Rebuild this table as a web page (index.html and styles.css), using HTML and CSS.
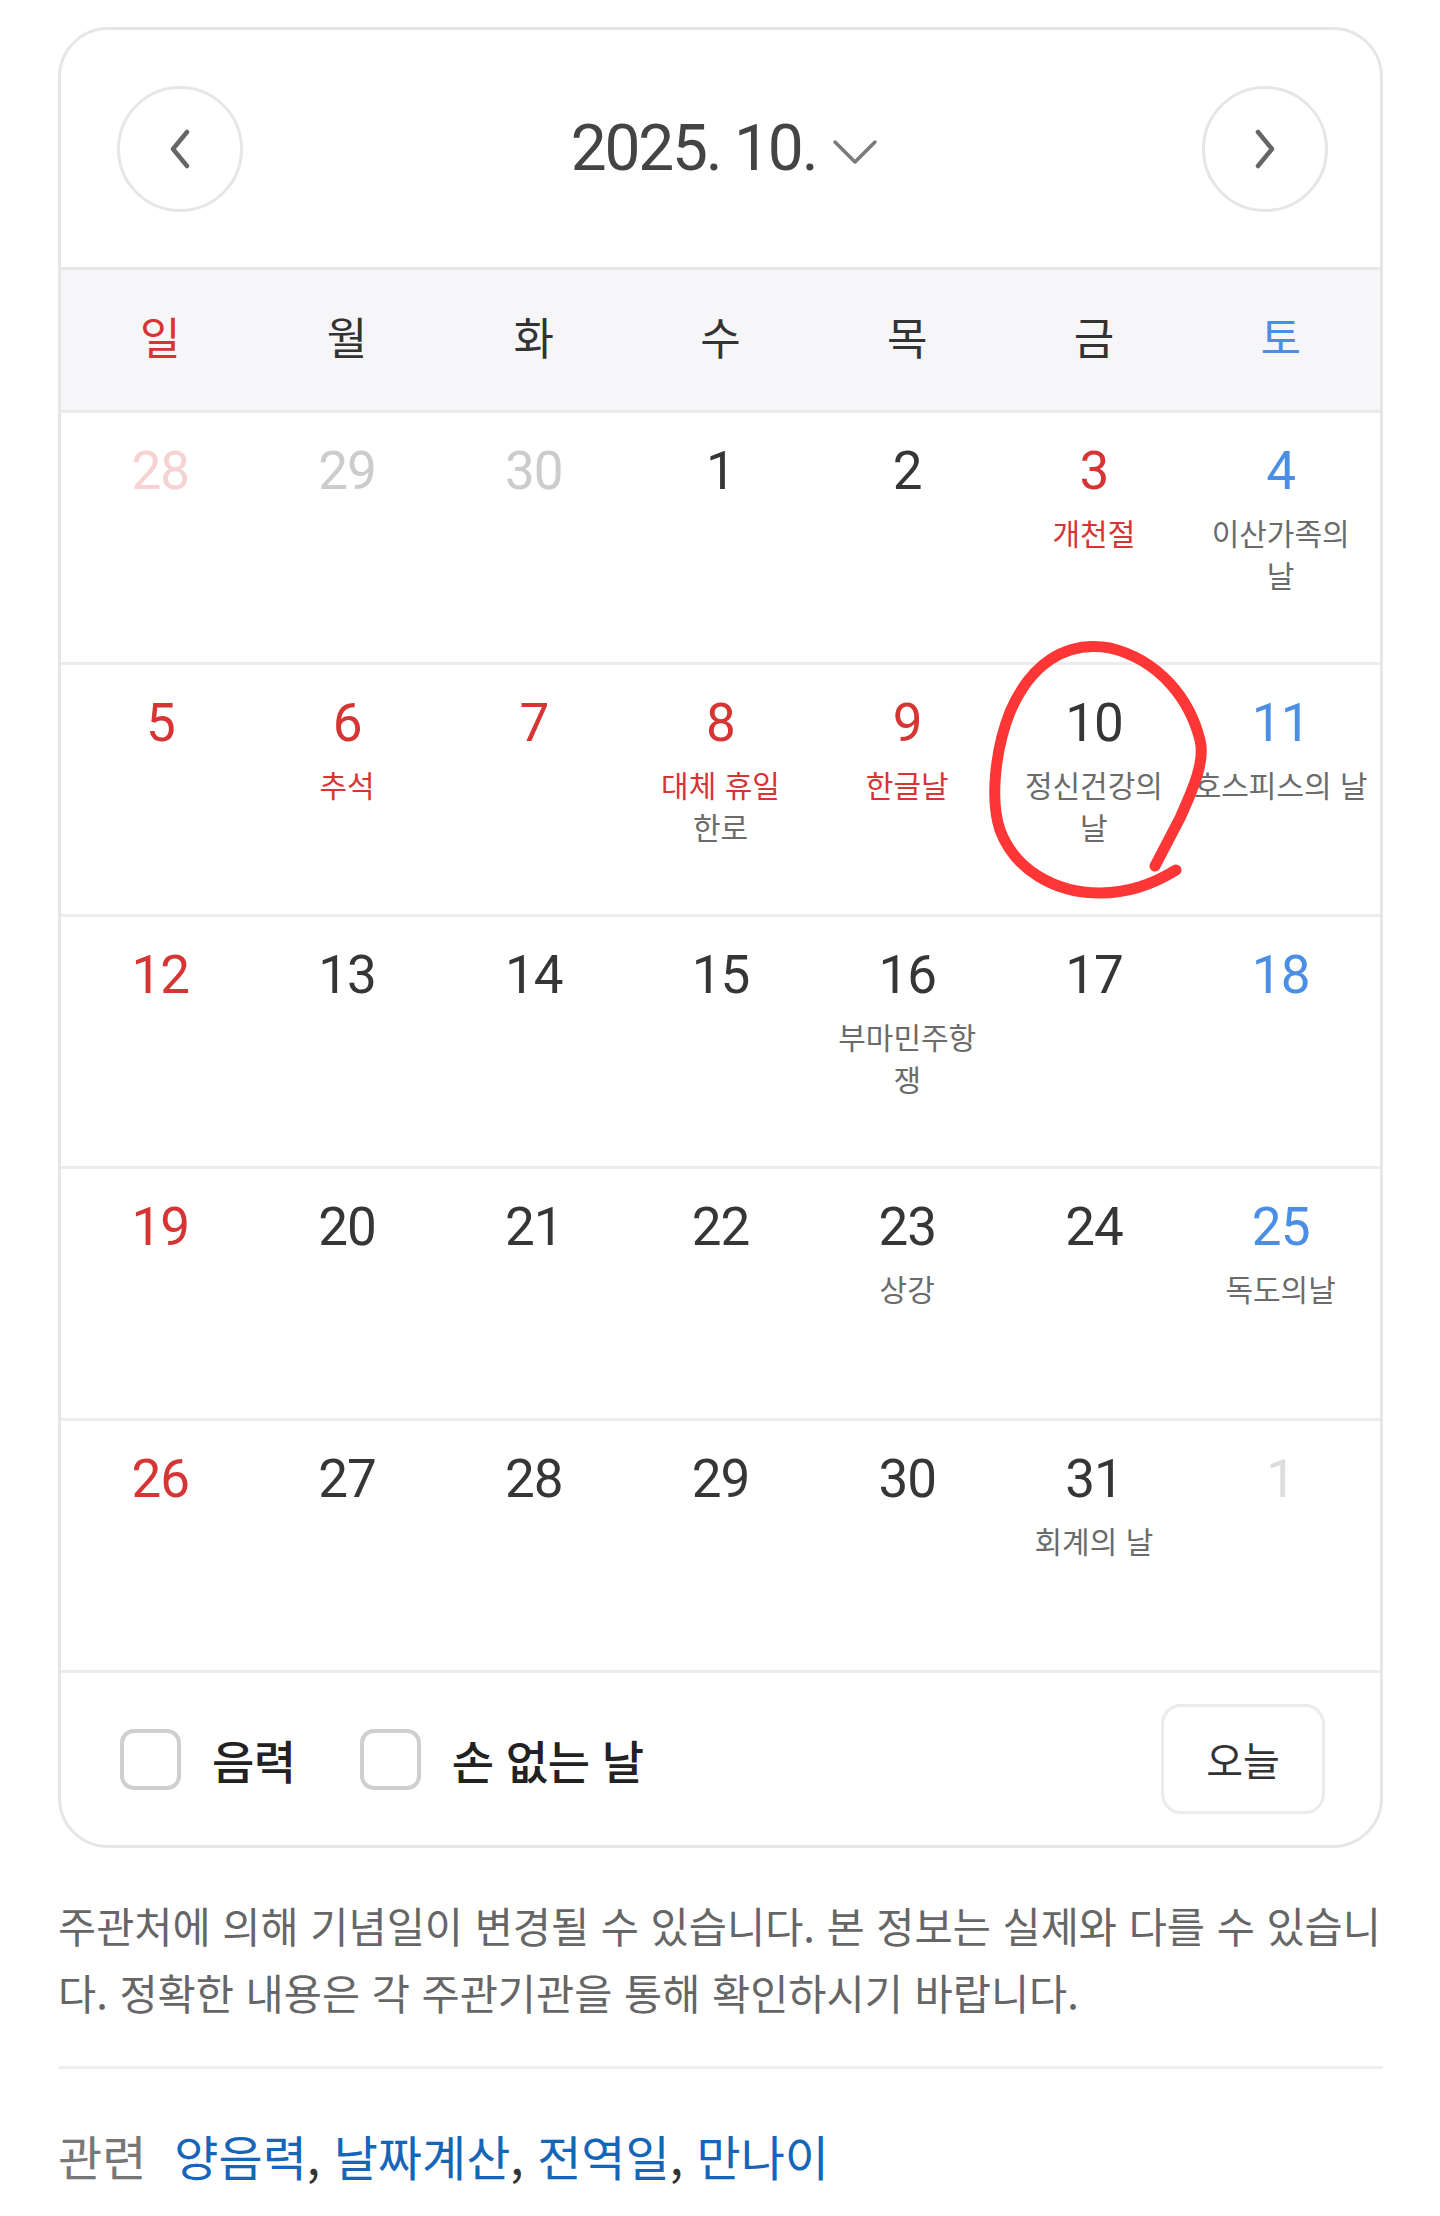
FILE: index.html
```html
<!DOCTYPE html>
<html lang="ko">
<head>
<meta charset="utf-8">
<title>2025. 10. 달력</title>
<link rel="stylesheet" href="styles.css">
</head>
<body>
<div class="page">
  <section class="calendar">
    <header class="cal-head">
      <button class="nav-btn" aria-label="이전 달">
        <svg class="nav-icon" viewBox="0 0 24 40" width="24" height="40"><path d="M19 3 L5 20 L19 37"/></svg>
      </button>
      <div class="title">
        <span class="title-text">2025. 10.</span>
        <svg class="title-caret" viewBox="0 0 46 26" width="46" height="26"><path d="M3 3 L23 23 L43 3"/></svg>
      </div>
      <button class="nav-btn" aria-label="다음 달">
        <svg class="nav-icon" viewBox="0 0 24 40" width="24" height="40"><path d="M5 3 L19 20 L5 37"/></svg>
      </button>
    </header>

    <div class="weekdays">
      <span class="wd sun">일</span>
      <span class="wd">월</span>
      <span class="wd">화</span>
      <span class="wd">수</span>
      <span class="wd">목</span>
      <span class="wd">금</span>
      <span class="wd sat">토</span>
    </div>

    <div class="week">
      <div class="day"><span class="num faded-red">28</span></div>
      <div class="day"><span class="num faded">29</span></div>
      <div class="day"><span class="num faded">30</span></div>
      <div class="day"><span class="num">1</span></div>
      <div class="day"><span class="num">2</span></div>
      <div class="day"><span class="num red">3</span><span class="label red">개천절</span></div>
      <div class="day"><span class="num blue">4</span><span class="label">이산가족의 날</span></div>
    </div>

    <div class="week">
      <div class="day"><span class="num red">5</span></div>
      <div class="day"><span class="num red">6</span><span class="label red">추석</span></div>
      <div class="day"><span class="num red">7</span></div>
      <div class="day"><span class="num red">8</span><span class="label red">대체 휴일</span><span class="label">한로</span></div>
      <div class="day"><span class="num red">9</span><span class="label red">한글날</span></div>
      <div class="day"><span class="num">10</span><span class="label">정신건강의 날</span></div>
      <div class="day"><span class="num blue">11</span><span class="label nowrap">호스피스의 날</span></div>
    </div>

    <div class="week">
      <div class="day"><span class="num red">12</span></div>
      <div class="day"><span class="num">13</span></div>
      <div class="day"><span class="num">14</span></div>
      <div class="day"><span class="num">15</span></div>
      <div class="day"><span class="num">16</span><span class="label">부마민주항쟁</span></div>
      <div class="day"><span class="num">17</span></div>
      <div class="day"><span class="num blue">18</span></div>
    </div>

    <div class="week">
      <div class="day"><span class="num red">19</span></div>
      <div class="day"><span class="num">20</span></div>
      <div class="day"><span class="num">21</span></div>
      <div class="day"><span class="num">22</span></div>
      <div class="day"><span class="num">23</span><span class="label">상강</span></div>
      <div class="day"><span class="num">24</span></div>
      <div class="day"><span class="num blue">25</span><span class="label">독도의날</span></div>
    </div>

    <div class="week">
      <div class="day"><span class="num red">26</span></div>
      <div class="day"><span class="num">27</span></div>
      <div class="day"><span class="num">28</span></div>
      <div class="day"><span class="num">29</span></div>
      <div class="day"><span class="num">30</span></div>
      <div class="day"><span class="num">31</span><span class="label">회계의 날</span></div>
      <div class="day"><span class="num faded-light">1</span></div>
    </div>

    <footer class="cal-foot">
      <label class="check"><span class="box"></span><span class="check-text">음력</span></label>
      <label class="check"><span class="box"></span><span class="check-text">손 없는 날</span></label>
      <button class="today-btn">오늘</button>
    </footer>
  </section>

  <p class="notice">주관처에 의해 기념일이 변경될 수 있습니다. 본 정보는 실제와 다를 수 있습니다. 정확한 내용은 각 주관기관을 통해 확인하시기 바랍니다.</p>

  <hr class="divider">

  <p class="related"><span class="related-head">관련</span><a class="link">양음력</a>, <a class="link">날짜계산</a>, <a class="link">전역일</a>, <a class="link">만나이</a></p>

  <svg class="annotation" viewBox="0 0 1440 1000" width="1440" height="1000" aria-hidden="true">
    <path d="M1155 866 L1180 818 C1195 785 1205 760 1200 740 C1190 700 1160 660 1110 648 C1065 640 1030 665 1010 712 C995 750 990 800 1000 830 C1015 870 1055 893 1100 893 C1135 893 1160 880 1176 870"/>
  </svg>
</div>
</body>
</html>
```

FILE: styles.css
```css
* {
  box-sizing: border-box;
}

html, body {
  margin: 0;
  background: #ffffff;
}

body {
  font-family: "Noto Sans CJK KR", "Noto Sans", sans-serif;
  color: #333333;
}

.page {
  position: relative;
  width: 1440px;
  min-height: 2216px;
  padding: 27px 57px 0 58px;
}

/* ---------- calendar card ---------- */
.calendar {
  border: 3px solid #e6e6e6;
  border-radius: 50px;
  background: #ffffff;
}

.cal-head {
  height: 240px;
  display: flex;
  align-items: center;
  justify-content: space-between;
  padding: 0 52px 0 56px;
  border-bottom: 3px solid #e8e8e8;
}

.nav-btn {
  width: 126px;
  height: 126px;
  border: 3px solid #e6e6e6;
  border-radius: 50%;
  background: #ffffff;
  display: flex;
  align-items: center;
  justify-content: center;
  padding: 0;
}

.nav-icon path {
  fill: none;
  stroke: #666666;
  stroke-width: 4.5;
  stroke-linecap: round;
  stroke-linejoin: round;
}

.title {
  display: flex;
  align-items: center;
  gap: 16px;
  margin-left: 4px;
}

.title-text {
  font-family: Roboto, "Noto Sans", sans-serif;
  font-size: 64px;
  color: #444444;
  line-height: 1;
  letter-spacing: -2.2px;
}

.title-caret {
  margin-top: 6px;
}

.title-caret path {
  fill: none;
  stroke: #7a7a7a;
  stroke-width: 3.5;
  stroke-linecap: round;
  stroke-linejoin: round;
}

.weekdays {
  height: 140px;
  display: grid;
  grid-template-columns: repeat(7, 1fr);
  align-items: center;
  padding: 0 6px 8px;
  background: #f6f6f8;
}

.wd {
  text-align: center;
  font-size: 44px;
  color: #333333;
}

.wd.sun { color: #d73434; }
.wd.sat { color: #4a8fe3; }

.week {
  height: 252px;
  display: grid;
  grid-template-columns: repeat(7, 1fr);
  padding: 0 6px;
  border-top: 3px solid #ececec;
}

.day {
  display: flex;
  flex-direction: column;
  align-items: center;
  padding: 26px 18px 0;
  min-width: 0;
  text-align: center;
}

.num {
  font-family: Roboto, "Noto Sans", sans-serif;
  font-size: 53px;
  line-height: 64px;
  color: #363636;
  letter-spacing: -1px;
  margin-bottom: 8px;
}

.num.red { color: #d73434; }
.num.blue { color: #4a8fe3; }
.num.faded { color: #cccccc; }
.num.faded-red { color: #f6d2d2; }
.num.faded-light { color: #dddddd; }

.label {
  font-size: 30px;
  line-height: 42px;
  color: #6b6b6b;
}

.label.red { color: #d73434; }
.label.nowrap { white-space: nowrap; }

/* ---------- footer ---------- */
.cal-foot {
  height: 175px;
  display: flex;
  align-items: center;
  padding: 0 55px 0 59px;
  border-top: 3px solid #ececec;
}

.check {
  display: flex;
  align-items: center;
  gap: 31px;
  margin-right: 64px;
}

.box {
  width: 61px;
  height: 61px;
  border: 4px solid #cfcfcf;
  border-radius: 14px;
  background: #ffffff;
}

.check-text {
  font-size: 46px;
  font-weight: 500;
  color: #222222;
  letter-spacing: -0.5px;
}

.today-btn {
  margin-left: auto;
  width: 164px;
  height: 110px;
  border: 3px solid #ebebeb;
  border-radius: 20px;
  background: #ffffff;
  font-family: "Noto Sans CJK KR", sans-serif;
  font-size: 40px;
  color: #333333;
  padding: 0;
}

/* ---------- below card ---------- */
.notice {
  margin: 44px 0 0;
  font-size: 41.5px;
  line-height: 67px;
  color: #666666;
  letter-spacing: 0;
}

.divider {
  margin: 40px 0 0;
  border: none;
  height: 3px;
  background: #eeeeee;
}

.related {
  margin: 56px 0 0;
  font-size: 48px;
  line-height: 60px;
  color: #333333;
}

.related-head {
  color: #777777;
  margin-right: 28px;
}

.link {
  color: #1565b8;
  text-decoration: none;
}

/* ---------- annotation overlay ---------- */
.annotation {
  position: absolute;
  left: 0;
  top: 0;
  pointer-events: none;
}

.annotation path {
  fill: none;
  stroke: #ff3636;
  stroke-width: 11;
  stroke-linecap: round;
  stroke-linejoin: round;
}
```
